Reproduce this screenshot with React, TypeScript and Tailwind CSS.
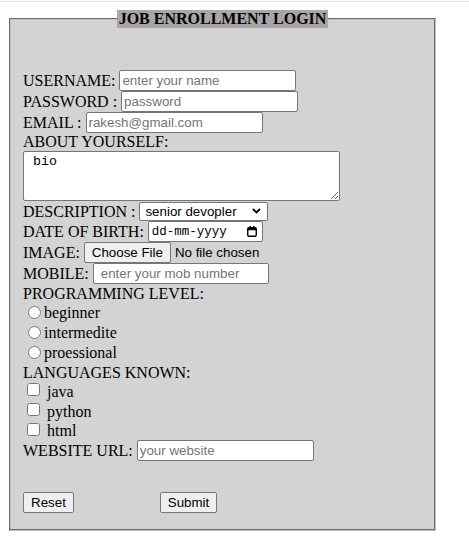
import React from 'react';

const serif = "font-['Liberation_Serif','Times_New_Roman',serif]";
const sans = "font-['Liberation_Sans',Arial,sans-serif]";
const inputBase =
  "h-[21px] ml-1 rounded-[2px] border border-[#767676] bg-white px-[2px] text-[13.333px] text-black outline-none placeholder:text-[#757575] font-['Liberation_Sans',Arial,sans-serif]";
const btnBase =
  "h-[21px] rounded-[2px] border border-[#767676] bg-[#efefef] text-[13.333px] text-black font-['Liberation_Sans',Arial,sans-serif]";

const TextRow = ({ label, children }: { label: string; children?: React.ReactNode }) => (
  <div className="flex h-[21px] items-center">
    <span>{label}</span>
    {children}
  </div>
);

export default function App() {
  return (
    <div className={`${serif} min-h-[551px] bg-white pt-px text-[16px] leading-[18px] text-black`}>
      <div className="h-px bg-[#e4e4e4]" />
      <fieldset className="mt-[8px] ml-[9px] w-[427px] border-2 [--tw-border-style:groove] [border-style:groove] border-[#c0c0c0] bg-[#d3d3d3] px-3 pt-[5px] pb-[16px]">
        <legend className="mx-auto bg-[#aaa5aa] px-[2px] text-[16px] font-bold leading-[18px]">
          JOB ENROLLMENT LOGIN
        </legend>

        <div className="h-[37px]" />

        <TextRow label="USERNAME:">
          <input className={`${inputBase} w-[177px]`} placeholder="enter your name" />
        </TextRow>
        <TextRow label="PASSWORD :">
          <input type="password" className={`${inputBase} w-[177px]`} placeholder="password" />
        </TextRow>
        <TextRow label="EMAIL :">
          <input className={`${inputBase} w-[177px]`} placeholder="rakesh@gmail.com" />
        </TextRow>

        <div className="flex h-[18px] items-center">ABOUT YOURSELF:</div>
        <div className="h-[51px]">
          <textarea
            className="block h-[50px] w-[317px] resize rounded-[2px] border border-[#767676] bg-white py-[2px] pl-[9px] pr-[2px] text-[13.333px] leading-[15px] text-black outline-none font-['Liberation_Mono','Courier_New',monospace]"
            defaultValue="bio"
          />
        </div>

        <div className="flex h-[19px] items-center">
          <span>DESCRIPTION :</span>
          <div className={`relative ml-1 flex h-[19px] w-[129px] items-center rounded-[2px] border border-[#767676] bg-white pl-[5px] text-[13.333px] ${sans}`}>
            senior devopler
            <svg className="absolute right-[6px] top-[5px]" width="9" height="6" viewBox="0 0 9 6">
              <path d="M1 1l3.5 3.5L8 1" fill="none" stroke="#000" strokeWidth="1.8" />
            </svg>
          </div>
        </div>

        <div className="flex h-[21px] items-center">
          <span>DATE OF BIRTH:</span>
          <div className="relative ml-1 flex h-[21px] w-[115px] items-center rounded-[2px] border border-[#767676] bg-white pl-[3px] text-[12.5px] font-['Liberation_Mono','Courier_New',monospace]">
            dd-mm-yyyy
            <svg className="absolute right-[5px] top-[4px]" width="10" height="11" viewBox="0 0 10 11">
              <rect x="0.75" y="1.75" width="8.5" height="8.5" rx="1.2" fill="none" stroke="#000" strokeWidth="1.4" />
              <rect x="0.75" y="1.75" width="8.5" height="2.5" fill="#000" />
              <rect x="2.5" y="0" width="1.4" height="2.5" fill="#000" />
              <rect x="6.1" y="0" width="1.4" height="2.5" fill="#000" />
            </svg>
          </div>
        </div>

        <div className="flex h-[21px] items-center">
          <span>IMAGE:</span>
          <button className={`${btnBase} ml-1 h-[20px] w-[87px]`}>Choose File</button>
          <span className={`ml-[4px] text-[13.333px] ${sans}`}>No file chosen</span>
        </div>

        <TextRow label="MOBILE:">
          <input className={`${inputBase} w-[176px] pl-[7px]`} placeholder="enter your mob number" />
        </TextRow>

        <div className="flex h-[19px] items-center">PROGRAMMING LEVEL:</div>
        {['beginner', 'intermedite', 'proessional'].map((l) => (
          <div key={l} className="flex h-[20px] items-center">
            <input type="radio" name="level" className="m-0 ml-[5px] mr-[3px] h-[13px] w-[13px] self-start mt-[3px]" />
            <span>{l}</span>
          </div>
        ))}

        <div className="flex h-[19px] items-center">LANGUAGES KNOWN:</div>
        {['java', 'python', 'html'].map((l, i) => (
          <div key={l} className={`flex items-center ${i === 2 ? 'h-[18px]' : 'h-[20px]'}`}>
            <input type="checkbox" className="m-0 ml-[4px] mr-[7px] h-[13px] w-[13px] self-start mt-[1px]" />
            <span>{l}</span>
          </div>
        ))}

        <TextRow label="WEBSITE URL:">
          <input className={`${inputBase} w-[177px]`} placeholder="your website" />
        </TextRow>

        <div className="h-[31px]" />

        <div className="flex h-[21px] items-center">
          <button className={`${btnBase} w-[51px]`}>Reset</button>
          <button className={`${btnBase} ml-[86px] w-[57px]`}>Submit</button>
        </div>
      </fieldset>
    </div>
  );
}
